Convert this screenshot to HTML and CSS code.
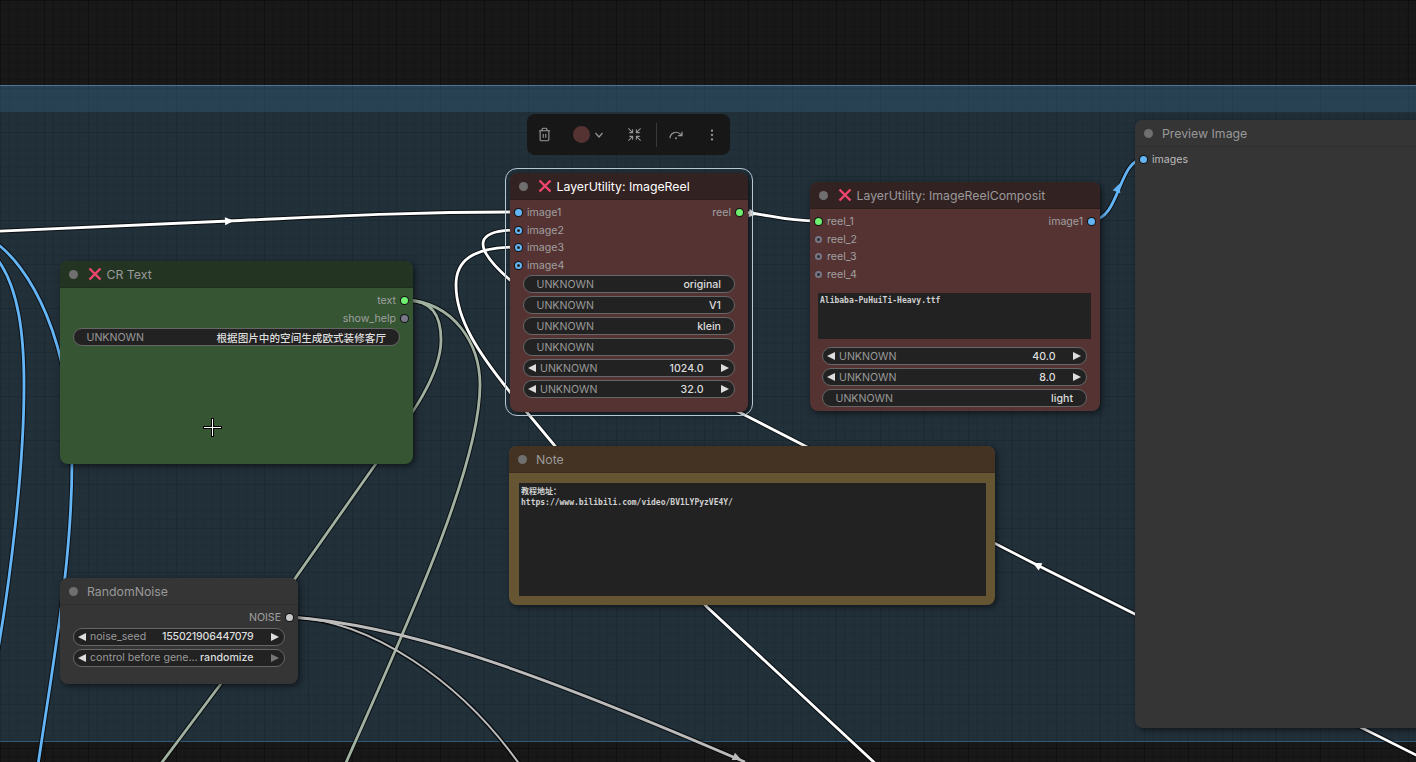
FILE: index.html
```html
<!DOCTYPE html>
<html lang="en">
  <head>
    <meta charset="UTF-8" />
    <meta name="viewport" content="width=device-width, initial-scale=1.0" />
    <title>Workflow</title>
    <link rel="stylesheet" href="styles.css">
  </head>
  <body>
    <div class="canvas">
      <div class="group">
        <div class="group-title"></div>
      </div>

      <svg class="wires" width="1416" height="762" viewBox="0 0 1416 762">
        <defs>
          <path id="w-image1" d="M-10 231.5 L229 221 C320 217 400 212 518 212" />
          <path id="w-reel" d="M740 212 C770 214 780 221 818 221" />
          <path id="w-image2" d="M518 230 C476 230 470 245 510 280 C545 310 680 380 735 410 L1037 565 L1420 757" />
          <path id="w-image3" d="M518 247 C470 247 456 262 456 285 C456 320 480 355 510 392 L555 446 L707 607 L878 766" />
          <path id="w-out" d="M1092 220 C1120 220 1118 159 1144 159" />
          <path id="w-blue-a" d="M-6 255 C20 285 24 340 24 385 C24 470 10 580 -2 650" />
          <path id="w-blue-b" d="M-8 240 C30 265 72 340 72 460 C72 560 55 650 38 765" />
          <path id="w-text-a" d="M405 300 C432 300 441 315 441 340 C441 380 400 430 375 465 L220 685 L160 765" />
          <path id="w-text-b" d="M405 300 C455 302 480 345 480 385 C480 470 400 640 345 765" />
          <path id="w-noise-a" d="M291 617 C400 625 520 665 745 762" />
          <path id="w-noise-b" d="M291 617 C370 620 460 680 520 765" />
        </defs>
        <g class="wire-edge">
          <use href="#w-image1" /><use href="#w-reel" /><use href="#w-image2" /><use href="#w-image3" />
          <use href="#w-out" /><use href="#w-blue-a" /><use href="#w-blue-b" />
          <use href="#w-text-a" /><use href="#w-text-b" /><use href="#w-noise-a" /><use href="#w-noise-b" />
        </g>
        <g class="wire wire-blue">
          <use href="#w-blue-a" /><use href="#w-blue-b" /><use href="#w-out" />
          <polygon points="-4,-4 5,0 -4,4" transform="translate(1118 188) rotate(-68)" />
        </g>
        <g class="wire wire-green">
          <use href="#w-text-a" /><use href="#w-text-b" />
        </g>
        <g class="wire wire-gray">
          <use href="#w-noise-a" />
          <polygon points="-4,-4 5,0 -4,4" transform="translate(737 758) rotate(24)" />
        </g>
        <g class="wire wire-gray wire-thin">
          <use href="#w-noise-b" />
        </g>
        <g class="wire wire-white">
          <use href="#w-image1" /><use href="#w-reel" /><use href="#w-image2" /><use href="#w-image3" />
          <polygon points="-4,-4 5,0 -4,4" transform="translate(229 221) rotate(-2)" />
          <polygon points="-4,-4 5,0 -4,4" transform="translate(753 213.500) rotate(8)" />
          <polygon points="-4,-4 5,0 -4,4" transform="translate(1037 565) rotate(207)" />
        </g>
      </svg>

      <div class="toolbar">
        <span class="tool">
          <svg width="15" height="15" viewBox="0 0 24 24">
            <path d="M3 6h18M19 6v14c0 1-1 2-2 2H7c-1 0-2-1-2-2V6M8 6V4c0-1 1-2 2-2h4c1 0 2 1 2 2v2M10 11v6M14 11v6" />
          </svg>
        </span>
        <span class="tool tool-color">
          <span class="swatch"></span>
          <svg width="12" height="12" viewBox="0 0 24 24"><path d="M5 8l7 8 7-8" /></svg>
        </span>
        <span class="tool tool-thin">
          <svg width="15" height="15" viewBox="0 0 16 16">
            <path d="M1.500 1.500L6 6M6 2.500V6H2.500M14.500 1.500L10 6M10 2.500V6h3.500M1.500 14.500L6 10M6 13.500V10H2.500M14.500 14.500L10 10M10 13.500V10h3.500" />
          </svg>
        </span>
        <span class="tool-divider"></span>
        <span class="tool">
          <svg width="16" height="16" viewBox="0 0 24 24">
            <path d="M21 7v6h-6M3 17a9 9 0 0 1 15-6.700L21 13" />
            <circle class="fill" cx="12" cy="17" r="1.500" />
          </svg>
        </span>
        <span class="tool">
          <svg width="14" height="14" viewBox="0 0 24 24">
            <circle class="fill" cx="12" cy="4.500" r="2" />
            <circle class="fill" cx="12" cy="12" r="2" />
            <circle class="fill" cx="12" cy="19.500" r="2" />
          </svg>
        </span>
      </div>

      <div class="node node-green node-crtext">
        <div class="node-head">
          <span class="head-dot"></span>
          <svg class="cross" width="14" height="14" viewBox="0 0 14 14"><path d="M1.500 1.500l11 11M12.500 1.500l-11 11" /></svg>
          <span class="node-title">CR Text</span>
        </div>
        <div class="slots">
          <div class="slot-col"></div>
          <div class="slot-col slot-col-out">
            <div class="slot">text<span class="dot dot-green"></span></div>
            <div class="slot">show_help<span class="dot dot-idle"></span></div>
          </div>
        </div>
        <div class="widgets">
          <div class="widget"><span class="w-label">UNKNOWN</span><span class="w-value">根据图片中的空间生成欧式装修客厅</span></div>
        </div>
      </div>

      <div class="node node-gray node-noise">
        <div class="node-head">
          <span class="head-dot"></span>
          <span class="node-title">RandomNoise</span>
        </div>
        <div class="slots">
          <div class="slot-col"></div>
          <div class="slot-col slot-col-out">
            <div class="slot">NOISE<span class="dot dot-light"></span></div>
          </div>
        </div>
        <div class="widgets">
          <div class="widget widget-num"><span class="w-label">noise_seed</span><span class="w-value w-seed">155021906447079</span></div>
          <div class="widget widget-num widget-last"><span class="w-label">control before gene…</span><span class="w-value">randomize</span></div>
        </div>
      </div>

      <div class="node node-red node-reel is-selected">
        <div class="node-head">
          <span class="head-dot"></span>
          <svg class="cross" width="14" height="14" viewBox="0 0 14 14"><path d="M1.500 1.500l11 11M12.500 1.500l-11 11" /></svg>
          <span class="node-title">LayerUtility: ImageReel</span>
        </div>
        <div class="slots">
          <div class="slot-col">
            <div class="slot"><span class="dot dot-blue"></span>image1</div>
            <div class="slot"><span class="dot dot-blue-ring"></span>image2</div>
            <div class="slot"><span class="dot dot-blue-ring"></span>image3</div>
            <div class="slot"><span class="dot dot-blue-ring"></span>image4</div>
          </div>
          <div class="slot-col slot-col-out">
            <div class="slot">reel<span class="dot dot-green"></span></div>
          </div>
        </div>
        <div class="widgets">
          <div class="widget"><span class="w-label">UNKNOWN</span><span class="w-value">original</span></div>
          <div class="widget"><span class="w-label">UNKNOWN</span><span class="w-value">V1</span></div>
          <div class="widget"><span class="w-label">UNKNOWN</span><span class="w-value">klein</span></div>
          <div class="widget"><span class="w-label">UNKNOWN</span></div>
          <div class="widget widget-num"><span class="w-label">UNKNOWN</span><span class="w-value">1024.0</span></div>
          <div class="widget widget-num"><span class="w-label">UNKNOWN</span><span class="w-value">32.0</span></div>
        </div>
      </div>

      <div class="node node-red node-composit">
        <div class="node-head">
          <span class="head-dot"></span>
          <svg class="cross" width="14" height="14" viewBox="0 0 14 14"><path d="M1.500 1.500l11 11M12.500 1.500l-11 11" /></svg>
          <span class="node-title">LayerUtility: ImageReelComposit</span>
        </div>
        <div class="slots">
          <div class="slot-col">
            <div class="slot"><span class="dot dot-green"></span>reel_1</div>
            <div class="slot"><span class="dot dot-idle-ring"></span>reel_2</div>
            <div class="slot"><span class="dot dot-idle-ring"></span>reel_3</div>
            <div class="slot"><span class="dot dot-idle-ring"></span>reel_4</div>
          </div>
          <div class="slot-col slot-col-out">
            <div class="slot">image1<span class="dot dot-blue"></span></div>
          </div>
        </div>
        <div class="text-box text-box-font">Alibaba-PuHuiTi-Heavy.ttf</div>
        <div class="widgets">
          <div class="widget widget-num"><span class="w-label">UNKNOWN</span><span class="w-value">40.0</span></div>
          <div class="widget widget-num"><span class="w-label">UNKNOWN</span><span class="w-value">8.0</span></div>
          <div class="widget"><span class="w-label">UNKNOWN</span><span class="w-value">light</span></div>
        </div>
      </div>

      <div class="node node-brown node-note">
        <div class="node-head">
          <span class="head-dot"></span>
          <span class="node-title">Note</span>
        </div>
        <div class="text-box text-box-note">教程地址：
https://www.bilibili.com/video/BV1LYPyzVE4Y/</div>
      </div>

      <div class="node node-gray node-preview">
        <div class="node-head">
          <span class="head-dot"></span>
          <span class="node-title">Preview Image</span>
        </div>
        <div class="slots">
          <div class="slot-col">
            <div class="slot slot-bright"><span class="dot dot-blue"></span>images</div>
          </div>
        </div>
      </div>

      <svg class="cursor" width="21" height="21" viewBox="0 0 21 21">
        <path class="cursor-edge" d="M10.500 1v19M1 10.500h19" />
        <path class="cursor-line" d="M10.500 2v17M2 10.500h17" />
      </svg>
    </div>
  </body>
</html>
```

FILE: styles.css
```css
html,
body {
  margin: 0;
  height: 100%;
  background: #181818;
}
.canvas {
  position: relative;
  width: 1416px;
  height: 762px;
  overflow: hidden;
  font-family: Inter, "Noto Sans CJK SC", sans-serif;
  font-size: 10.6px;
  background-color: #181818;
  background-image:
    linear-gradient(to right, rgba(0, 0, 0, 0.22) 1px, transparent 1px),
    linear-gradient(to bottom, rgba(0, 0, 0, 0.22) 1px, transparent 1px),
    linear-gradient(to right, rgba(0, 0, 0, 0.14) 1px, transparent 1px),
    linear-gradient(to bottom, rgba(0, 0, 0, 0.14) 1px, transparent 1px);
  background-size: 44px 44px, 44px 44px, 8.8px 8.8px, 8.8px 8.8px;
}

.group {
  position: absolute;
  left: -2px;
  right: -2px;
  top: 85px;
  height: 655px;
  background: rgba(63, 120, 158, 0.25);
  border: 1px solid #2f5a7c;
  border-top-color: #4d7694;
}
.group-title {
  height: 26px;
  background: rgba(63, 120, 158, 0.25);
}

.wires {
  position: absolute;
  left: 0;
  top: 0;
}
.wire-edge {
  fill: none;
  stroke: rgba(0, 0, 0, 0.65);
  stroke-width: 4.8px;
}
.wire {
  fill: none;
  stroke-width: 2.8px;
}
.wire polygon {
  stroke: none;
}
.wire-white {
  stroke: #fff;
}
.wire-white polygon {
  fill: #fff;
}
.wire-blue {
  stroke: #64b5f6;
}
.wire-blue polygon {
  fill: #64b5f6;
}
.wire-green {
  stroke: #a1b1a1;
}
.wire-gray {
  stroke: #bcbcbc;
}
.wire-gray polygon {
  fill: #bcbcbc;
}
.wire-thin {
  stroke-width: 2px;
}

.toolbar {
  position: absolute;
  left: 527px;
  top: 114px;
  width: 203px;
  height: 41px;
  display: flex;
  align-items: center;
  background: #171717;
  border-radius: 8px;
}
.tool {
  width: 36px;
  height: 40px;
  display: flex;
  align-items: center;
  justify-content: center;
}
.tool svg {
  fill: none;
  stroke: #969696;
  stroke-width: 1.8;
}
.tool svg .fill {
  fill: #969696;
  stroke: none;
}
.tool-thin svg {
  stroke-width: 1.1;
}
.tool-color {
  width: 54px;
  gap: 3px;
  justify-content: flex-start;
  padding-left: 10px;
  box-sizing: border-box;
}
.tool-color svg {
  stroke-width: 2.4;
}
.swatch {
  width: 17px;
  height: 17px;
  border-radius: 50%;
  background: #553333;
}
.tool-divider {
  width: 1px;
  height: 24px;
  margin: 0 2px 0 3.5px;
  background: #3a3a3a;
}

.node {
  position: absolute;
  display: flex;
  flex-direction: column;
  border-radius: 8px;
  box-shadow: 2px 2px 6px rgba(0, 0, 0, 0.55);
  color: #a8a8a8;
}
.node-head {
  height: 26.5px;
  flex: none;
  display: flex;
  align-items: center;
  padding: 1px 0 0 8.5px;
  border-radius: 8px 8px 0 0;
  font-size: 12.3px;
  border-bottom: 1px solid rgba(0, 0, 0, 0.12);
  box-sizing: border-box;
}
.head-dot {
  width: 9px;
  height: 9px;
  margin-right: 9.5px;
  border-radius: 50%;
  background: #6f6f6f;
}
.cross {
  margin: 0 4.5px 0 1px;
  fill: none;
  stroke: #f0466e;
  stroke-width: 2.4;
}
.node-title {
  color: #999;
  white-space: nowrap;
}
.is-selected .node-title {
  color: #fff;
}
.is-selected::before {
  content: "";
  position: absolute;
  inset: -5px -5px -4px;
  border: 1px solid #b6c8d2;
  border-radius: 12px;
  pointer-events: none;
}

.node-green {
  background: #355533;
}
.node-green .node-head {
  background: #233522;
}
.node-red {
  background: #553333;
}
.node-red .node-head {
  background: #332222;
}
.node-gray {
  background: #353535;
}
.node-gray .node-head {
  background: #353535;
}
.node-brown {
  background: #665533;
}
.node-brown .node-head {
  background: #443322;
}

.node-crtext {
  left: 60px;
  top: 261px;
  width: 353px;
  height: 203px;
}
.node-noise {
  left: 60px;
  top: 578px;
  width: 238px;
  height: 106px;
}
.node-reel {
  left: 510px;
  top: 173px;
  width: 238px;
  height: 239px;
}
.node-composit {
  left: 810px;
  top: 182px;
  width: 290px;
  height: 229px;
}
.node-note {
  left: 509px;
  top: 446px;
  width: 486px;
  height: 159px;
}
.node-preview {
  left: 1135px;
  top: 120px;
  width: 340px;
  height: 608px;
}

.slots {
  display: flex;
  justify-content: space-between;
  padding: 4.5px 5px 0;
  flex: none;
}
.slot-col {
  display: flex;
  flex-direction: column;
}
.slot-col-out {
  align-items: flex-end;
}
.slot {
  height: 17.6px;
  display: flex;
  align-items: center;
  gap: 5px;
  color: #a0a0a0;
}
.slot-bright {
  color: #bbb;
}
.dot {
  width: 7px;
  height: 7px;
  border-radius: 50%;
  box-sizing: border-box;
  box-shadow: 0 0 0 1px #151515;
}
.dot-green {
  background: #70f070;
}
.dot-blue {
  background: #64b5f6;
}
.dot-blue-ring {
  border: 2px solid #64b5f6;
  background: #262626;
}
.dot-idle {
  background: #777788;
}
.dot-idle-ring {
  border: 2px solid #777788;
  background: #2c2c2c;
  box-shadow: none;
}
.dot-light {
  background: #c8c8c8;
}

.widgets {
  display: flex;
  flex-direction: column;
  gap: 3px;
  margin: 1px 13px 0;
}
.node-composit .widgets {
  margin-left: 12px;
}
.widget {
  height: 18px;
  box-sizing: border-box;
  display: flex;
  align-items: center;
  padding: 0 13px 0 12.5px;
  background: #222;
  border: 1px solid #666;
  border-radius: 9px;
  white-space: nowrap;
}
.w-label {
  color: #999;
}
.w-value {
  margin-left: auto;
  color: #ddd;
  font-weight: 500;
}
.w-seed {
  letter-spacing: -0.2px;
}
.widget-num {
  padding: 0 5px 0 4px;
}
.widget-num .w-label {
  margin-left: 4px;
}
.widget-num::before,
.widget-num::after {
  content: "";
  width: 0;
  height: 0;
  flex: none;
  border-top: 4.5px solid transparent;
  border-bottom: 4.5px solid transparent;
}
.widget-num::before {
  border-right: 8.5px solid #ddd;
}
.widget-num::after {
  margin-left: 17.5px;
  border-left: 8.5px solid #ddd;
}
.widget-last::after {
  border-left-color: #777;
}

.text-box {
  background: #222;
  color: #d0d0d0;
  font-family: "DejaVu Sans Mono", "Noto Sans CJK SC", monospace;
  font-size: 8px;
  font-weight: 700;
  line-height: 11px;
  white-space: pre;
  box-sizing: border-box;
  padding: 2px;
}
.text-box-font {
  height: 46px;
  margin: 9.9px 9px 7px 8px;
}
.text-box-note {
  height: 113px;
  margin: 10px 9px 0 10px;
  padding-top: 3px;
}

.cursor {
  position: absolute;
  left: 202px;
  top: 417px;
  fill: none;
}
.cursor-edge {
  stroke: #000;
  stroke-width: 3px;
}
.cursor-line {
  stroke: #fff;
  stroke-width: 1px;
}
```
